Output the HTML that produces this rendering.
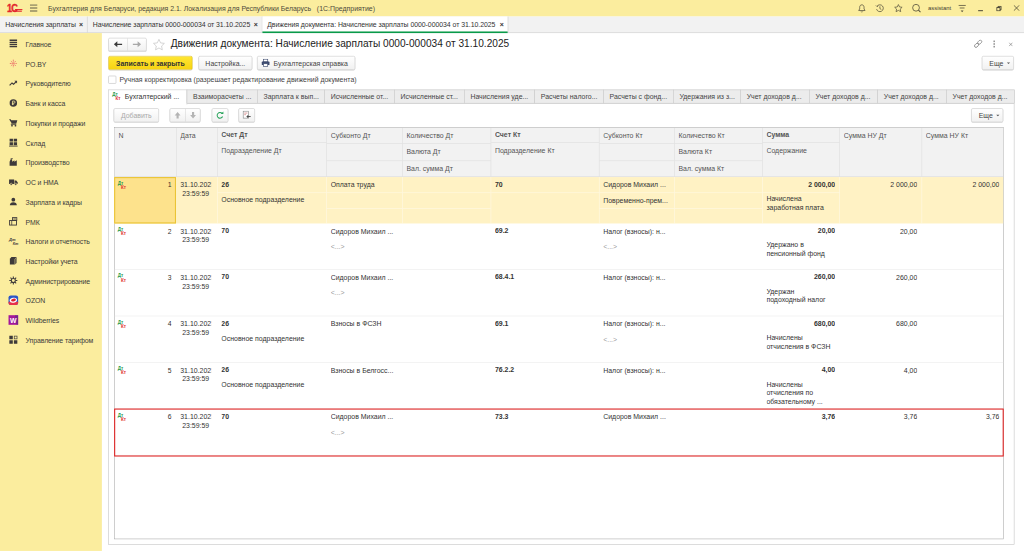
<!DOCTYPE html>
<html lang="ru">
<head>
<meta charset="utf-8">
<title>Движения документа: Начисление зарплаты 0000-000034 от 31.10.2025</title>
<style>
html,body{margin:0;padding:0;}
body{width:1024px;height:551px;overflow:hidden;background:#fff;font-family:"Liberation Sans",Arial,sans-serif;}
#app{position:absolute;left:0;top:0;width:1920px;height:1033px;transform:scale(0.533333);transform-origin:0 0;font-size:13px;color:#333;overflow:hidden;background:#fff;}
.abs{position:absolute;}
#topbar{position:absolute;left:0;top:0;width:1920px;height:31px;background:#fbed9e;}
#tabbar{position:absolute;left:0;top:31px;width:1920px;height:30px;background:#f2f2f2;border-bottom:1px solid #c9c9c9;}
#sidebar{position:absolute;left:0;top:62px;width:191px;height:971px;background:#fbed9e;}
.sitem{position:absolute;left:48px;height:20px;line-height:24px;letter-spacing:-0.2px;font-size:13px;color:#3c3c3c;white-space:nowrap;}
.sicon{position:absolute;left:16px;width:18px;height:18px;}
.wtab{position:absolute;top:0;height:30px;line-height:30px;font-size:13px;color:#333;white-space:nowrap;letter-spacing:-0.1px;}
.wsep{position:absolute;top:0;width:1px;height:30px;background:#c9c9c9;}
.wx{position:absolute;top:0;height:30px;line-height:30px;font-size:13px;font-weight:bold;color:#333;}
.btn{position:absolute;box-sizing:border-box;border:1px solid #c3c3c3;border-radius:3px;background:linear-gradient(#ffffff,#f1f1f1);box-shadow:0 1px 1px rgba(0,0,0,0.18);text-align:center;font-size:13px;color:#444;white-space:nowrap;}

.ybtn{font-weight:bold;background:linear-gradient(#ffe632,#f7d313);border-color:#d9b800;color:#333;}
.btn.dis{color:#a9a9a9;}
.car{position:absolute;right:6px;top:11px;width:0;height:0;border-left:3px solid transparent;border-right:3px solid transparent;border-top:3.500px solid #555;}
.tab{position:absolute;top:168px;height:26px;box-sizing:border-box;border:1px solid #c4c4c4;background:#ececec;line-height:24px;padding-left:11px;white-space:nowrap;overflow:hidden;color:#444;font-size:13px;}
.tab.act{background:#fff;border-bottom:none;height:28px;color:#333;}
.dk{width:20px;height:16px;font-weight:bold;font-size:8.5px;line-height:8px;}
.dk .dt{position:absolute;left:0;top:0;color:#1e9a4a;}
.dk .kt{position:absolute;left:6px;top:7.5px;color:#e03030;}
.vl{width:1px;background:#dcdcdc;}
.hl{height:1px;background:#dcdcdc;}
.ht{position:absolute;height:31px;line-height:31px;color:#555;white-space:nowrap;overflow:hidden;font-size:13px;}
.ct{position:absolute;height:16px;line-height:16px;color:#333;white-space:nowrap;overflow:hidden;font-size:13px;}
.ml{height:auto !important;}
.b{font-weight:bold;}
.r{text-align:right;}
.g{color:#9a9a9a;}
</style>
</head>
<body>
<div id="app">
<div id="topbar">
  <div class="abs" style="left:12px;top:3px;width:34px;height:24px;">
    <div class="abs" style="left:1px;top:0;font:bold 20px/24px 'Liberation Sans',sans-serif;color:#e3262e;-webkit-text-stroke:0.7px #e3262e;letter-spacing:-1.5px;transform:scaleX(0.86);transform-origin:0 0;">1С</div>
    <div class="abs" style="left:16px;top:13.500px;width:14px;height:2px;background:#e3262e;"></div>
    <div class="abs" style="left:13px;top:17.300px;width:16px;height:2.200px;background:#e3262e;"></div>
  </div>
  <svg class="abs" style="left:56px;top:8px" width="15" height="15" viewBox="0 0 15 15"><path d="M0 1.5h14M0 7h14M0 12.5h14" stroke="#5f5a46" stroke-width="2" fill="none"/></svg>
  <div class="abs" style="left:90px;top:0;height:31px;line-height:32px;font-size:13px;color:#4d4a3c;white-space:pre;">Бухгалтерия для Беларуси, редакция 2.1. Локализация для Республики Беларусь   (1С:Предприятие)</div>
  <!-- right icons -->
  <svg class="abs" style="left:1608px;top:6.500px" width="16" height="18" viewBox="0 0 18 20"><path d="M9 2.2c-3 0-4.6 2.3-4.6 5.2v3.4L2.3 14.2h13.4l-2.1-3.4V7.4c0-2.900-1.600-5.200-4.600-5.200z" fill="none" stroke="#55503c" stroke-width="1.6" stroke-linejoin="round"/><path d="M7.300 16.300a1.800 1.800 0 0 0 3.400 0" fill="none" stroke="#55503c" stroke-width="1.500"/></svg>
  <svg class="abs" style="left:1641px;top:6.800px" width="17.600" height="17.600" viewBox="0 0 20 20"><path d="M4.100 5.200A7.300 7.300 0 1 1 2.900 11.500" fill="none" stroke="#55503c" stroke-width="1.600"/><path d="M1.300 3.600l2.600 2.600 2.800-2.100" fill="none" stroke="#55503c" stroke-width="1.600"/><path d="M10 5.500v4.800l3 2" fill="none" stroke="#55503c" stroke-width="1.600"/></svg>
  <svg class="abs" style="left:1675.500px;top:7px" width="17" height="17" viewBox="0 0 20 20"><path d="M10 1.800l2.500 5.300 5.700.7-4.200 4 1.100 5.700-5.100-2.800-5.100 2.800 1.100-5.700-4.200-4 5.700-.7z" fill="none" stroke="#55503c" stroke-width="1.600" stroke-linejoin="round"/></svg>
  <svg class="abs" style="left:1708.500px;top:6px" width="19" height="19" viewBox="0 0 20 20"><circle cx="9" cy="9" r="6.700" fill="none" stroke="#55503c" stroke-width="1.600"/><path d="M13.800 13.800l4 4" stroke="#55503c" stroke-width="2" fill="none"/></svg>
  <div class="abs" style="left:1740px;top:0;height:31px;line-height:30px;font-size:11px;color:#3f3c30;">assistant</div>
  <svg class="abs" style="left:1797px;top:8px" width="14" height="16" viewBox="0 0 14 16"><path d="M0 2.200h14M2.500 7h9" stroke="#55503c" stroke-width="1.500" fill="none"/><path d="M4.300 11.500h5.400L7 14.800z" fill="#55503c"/></svg>
  <div class="abs" style="left:1833.500px;top:19px;width:9.500px;height:2px;background:#55503c;"></div>
  <svg class="abs" style="left:1867.500px;top:10.500px" width="10.500" height="10.500" viewBox="0 0 14 14"><rect x="1.200" y="4.300" width="8.300" height="8.300" fill="none" stroke="#3f3c30" stroke-width="2.400"/><path d="M4.500 4V1.300h8.200V9.500H9.800" fill="none" stroke="#3f3c30" stroke-width="2.200"/></svg>
  <svg class="abs" style="left:1900px;top:9px" width="12" height="12" viewBox="0 0 14 14"><path d="M1 1l12 12M13 1L1 13" stroke="#55503c" stroke-width="1.800" fill="none"/></svg>
</div>
<div id="tabbar">
  <div class="wtab" style="left:10px;">Начисления зарплаты</div><div class="wx" style="left:148px;">×</div>
  <div class="wsep" style="left:163px;"></div>
  <div class="wtab" style="left:174px;">Начисление зарплаты 0000-000034 от 31.10.2025</div><div class="wx" style="left:476px;">×</div>
  <div class="wsep" style="left:491px;"></div>
  <div class="abs" style="left:492px;top:0;width:460px;height:31px;background:#fff;"></div>
  <div class="abs" style="left:492px;top:28px;width:460px;height:3px;background:#0a9a4a;"></div>
  <div class="wtab" style="left:501px;">Движения документа: Начисление зарплаты 0000-000034 от 31.10.2025</div><div class="wx" style="left:937px;">×</div>
  <div class="wsep" style="left:952px;"></div>
</div>
<div id="sidebar">
  <svg class="abs" style="left:17px;top:12px;overflow:visible" width="16" height="16" viewBox="0 0 16 16"><path d="M1 1.500h14M1 5.500h14M1 9.500h14M1 13.500h14" stroke="#3e3a3a" stroke-width="2.600" fill="none"/></svg><div class="sitem" style="top:10px;">Главное</div>
  <svg class="abs" style="left:17px;top:49px;overflow:visible" width="16" height="16" viewBox="0 0 16 16"><g stroke="#e3304f" stroke-width="1.300" fill="none"><path d="M8 1v14M1.500 8h5M10 8h4.500M3.500 3.500l3 3M12.500 3.500l-3 3M3.500 12.500l3-3M12.500 12.500l-3-3" stroke-dasharray="2 1.200"/></g></svg><div class="sitem" style="top:47px;">PO.BY</div>
  <svg class="abs" style="left:17px;top:86px;overflow:visible" width="16" height="16" viewBox="0 0 16 16"><path d="M1 12l4.500-4.500 3 2.500 5-5" stroke="#3e3a3a" stroke-width="2.200" fill="none"/><path d="M10 3.500h5v5z" fill="#3e3a3a"/></svg><div class="sitem" style="top:84px;">Руководителю</div>
  <svg class="abs" style="left:17px;top:123px;overflow:visible" width="16" height="16" viewBox="0 0 16 16"><circle cx="8" cy="8" r="7" fill="#3e3a3a"/><path d="M6.500 12V4.500h2.700a2 2 0 0 1 0 4H5.300M5.300 10.300h4" stroke="#fbed9e" stroke-width="1.400" fill="none"/></svg><div class="sitem" style="top:121px;">Банк и касса</div>
  <svg class="abs" style="left:17px;top:160px;overflow:visible" width="16" height="16" viewBox="0 0 16 16"><path d="M0 1.500h3l1 2h11.500l-2 6.500H5.500z" fill="#3e3a3a"/><path d="M4.500 9.500l-.5 2h9.500" stroke="#3e3a3a" stroke-width="1.400" fill="none"/><circle cx="5.500" cy="13.700" r="1.600" fill="#3e3a3a"/><circle cx="12" cy="13.700" r="1.600" fill="#3e3a3a"/></svg><div class="sitem" style="top:158px;">Покупки и продажи</div>
  <svg class="abs" style="left:17px;top:197px;overflow:visible" width="16" height="16" viewBox="0 0 16 16"><path d="M1 1h6.300v5.500H1zM8.700 1H15v5.500H8.700zM1 7.900h6.300v5.500H1zM8.700 7.900H15v5.500H8.700z" fill="#3e3a3a"/><path d="M0 15h16" stroke="#3e3a3a" stroke-width="1.600"/></svg><div class="sitem" style="top:195px;">Склад</div>
  <svg class="abs" style="left:17px;top:234px;overflow:visible" width="16" height="16" viewBox="0 0 16 16"><path d="M1 15V7.500l2-5h2.500l.5 5 4-3v3l4.500-3V15z" fill="#3e3a3a"/><path d="M3 1.500h4" stroke="#3e3a3a" stroke-width="1.500"/></svg><div class="sitem" style="top:232px;">Производство</div>
  <svg class="abs" style="left:17px;top:271px;overflow:visible" width="16" height="16" viewBox="0 0 16 16"><path d="M0 3.500h9.500V12H0z" fill="#3e3a3a"/><path d="M10.300 5.500h3.200l2.500 3V12h-5.700z" fill="#3e3a3a"/><circle cx="4" cy="12.500" r="2" fill="#3e3a3a" stroke="#fbed9e" stroke-width="1"/><circle cx="12.500" cy="12.500" r="2" fill="#3e3a3a" stroke="#fbed9e" stroke-width="1"/></svg><div class="sitem" style="top:269px;">ОС и НМА</div>
  <svg class="abs" style="left:17px;top:308px;overflow:visible" width="16" height="16" viewBox="0 0 16 16"><circle cx="8" cy="4.500" r="3.500" fill="#3e3a3a"/><path d="M1.500 15c0-4 2.500-6 6.500-6s6.500 2 6.500 6z" fill="#3e3a3a"/></svg><div class="sitem" style="top:306px;">Зарплата и кадры</div>
  <svg class="abs" style="left:17px;top:345px;overflow:visible" width="16" height="16" viewBox="0 0 16 16"><rect x="1" y="6.500" width="13" height="8.500" fill="none" stroke="#3e3a3a" stroke-width="1.700"/><rect x="6.500" y="1" width="8" height="5" fill="none" stroke="#3e3a3a" stroke-width="1.600"/><path d="M5 7v8M8 3.500h5" stroke="#3e3a3a" stroke-width="1.400"/></svg><div class="sitem" style="top:343px;">РМК</div>
  <svg class="abs" style="left:17px;top:382px;overflow:visible" width="16" height="16" viewBox="0 0 16 16"><text x="0" y="7" font-family="Liberation Sans, sans-serif" font-size="7.500" font-weight="bold" font-style="italic" fill="#3e3a3a">Дт</text><text x="7" y="15" font-family="Liberation Sans, sans-serif" font-size="7" font-weight="bold" font-style="italic" fill="#3e3a3a">Кт</text></svg><div class="sitem" style="top:380px;">Налоги и отчетность</div>
  <svg class="abs" style="left:17px;top:419px;overflow:visible" width="16" height="16" viewBox="0 0 16 16"><path d="M1.500 4l3-3H14v11l-3 3H1.500z" fill="#3e3a3a"/><path d="M11 4.500V15M11 4.500l3-3" stroke="#fbed9e" stroke-width="1" fill="none"/></svg><div class="sitem" style="top:417px;">Настройки учета</div>
  <svg class="abs" style="left:17px;top:456px;overflow:visible" width="16" height="16" viewBox="0 0 16 16"><circle cx="8" cy="8" r="3.800" fill="none" stroke="#3e3a3a" stroke-width="2"/><path d="M8 0.500v3M8 12.500v3M0.500 8h3M12.500 8h3M2.700 2.700l2.100 2.100M11.200 11.200l2.100 2.100M2.700 13.300l2.100-2.100M11.200 4.800l2.100-2.100" stroke="#3e3a3a" stroke-width="2" fill="none"/></svg><div class="sitem" style="top:454px;">Администрирование</div>
  <svg class="abs" style="left:17px;top:493px;overflow:visible" width="16" height="16" viewBox="0 0 16 16"><rect x="-1" y="-1" width="18" height="18" rx="4" fill="#2b55c8"/><path d="M-1 11h18v2a4 4 0 0 1-4 4H3a4 4 0 0 1-4-4z" fill="#e8324a"/><ellipse cx="8" cy="8" rx="7" ry="4.600" fill="#fff" transform="rotate(-12 8 8)"/><ellipse cx="8.300" cy="7.700" rx="4.600" ry="2.600" fill="#e02030" transform="rotate(-12 8 8)"/></svg><div class="sitem" style="top:491px;">OZON</div>
  <svg class="abs" style="left:17px;top:530px;overflow:visible" width="16" height="16" viewBox="0 0 16 16"><rect x="-1" y="-1" width="18" height="18" fill="#a4179a"/><path d="M11 -1h6v18h-3z" fill="#5a2a86" opacity="0.600"/><text x="8" y="13" text-anchor="middle" font-family="Liberation Sans, sans-serif" font-size="13" font-weight="bold" fill="#fff">W</text></svg><div class="sitem" style="top:528px;">Wildberries</div>
  <svg class="abs" style="left:17px;top:567px;overflow:visible" width="16" height="16" viewBox="0 0 16 16"><path d="M0.500 0.500h6.500v6.500H0.500zM0.500 9h6.500v6.500H0.500zM9 9h6.500v6.500H9z" fill="#3e3a3a"/><rect x="9.700" y="1.200" width="5.200" height="5.200" fill="none" stroke="#3e3a3a" stroke-width="1.300"/></svg><div class="sitem" style="top:565px;">Управление тарифом</div>
</div>
<!--FORM_S-->
<div id="form">
<div class="btn" style="left:203px;top:71px;width:72px;height:25px;"></div>
<div class="abs" style="left:239px;top:72px;width:1px;height:23px;background:#d4d4d4;"></div>
<svg class="abs" style="left:212px;top:76px" width="18" height="14" viewBox="0 0 18 14"><path d="M17 7H4" stroke="#3a3a3a" stroke-width="2.400" fill="none"/><path d="M8 1.200L1.500 7 8 12.800z" fill="#3a3a3a"/></svg>
<svg class="abs" style="left:248px;top:76px" width="18" height="14" viewBox="0 0 18 14"><path d="M1 7h13" stroke="#a8a8a8" stroke-width="2.400" fill="none"/><path d="M10 1.200L16.500 7 10 12.800z" fill="#a8a8a8"/></svg>
<svg class="abs" style="left:286px;top:72px" width="24" height="24" viewBox="0 0 24 24"><path d="M12 1.800l3.100 6.600 7.100.9-5.200 5 1.300 7.100L12 18l-6.300 3.400L7 14.300l-5.200-5 7.100-.9z" fill="none" stroke="#c2c2c2" stroke-width="1.300" stroke-linejoin="round"/></svg>
<div class="abs" style="left:320px;top:68px;height:30px;line-height:30px;font-size:19px;color:#222;white-space:nowrap;">Движения документа: Начисление зарплаты 0000-000034 от 31.10.2025</div>
<svg class="abs" style="left:1826px;top:74px" width="17" height="17" viewBox="0 0 17 17"><g fill="none" stroke="#7a7a7a" stroke-width="1.400"><rect x="8.300" y="0.800" width="5.500" height="8.500" rx="2.750" transform="rotate(45 11 5)"/><rect x="2.300" y="6.800" width="5.500" height="8.500" rx="2.750" transform="rotate(45 5 11)"/></g></svg>
<div class="abs" style="left:1863px;top:76px;width:2px;height:3px;background:#666;"></div><div class="abs" style="left:1863px;top:81px;width:2px;height:3px;background:#666;"></div><div class="abs" style="left:1863px;top:86px;width:2px;height:3px;background:#666;"></div>
<svg class="abs" style="left:1890.500px;top:78.500px" width="8.500" height="8.500" viewBox="0 0 11 11"><path d="M1 1l9 9M10 1l-9 9" stroke="#7a7a7a" stroke-width="1.500" fill="none"/></svg>
<div class="btn ybtn" style="left:203px;top:105px;width:158px;height:26px;line-height:26px;">Записать и закрыть</div>
<div class="btn" style="left:372px;top:105px;width:101px;height:26px;line-height:26px;">Настройка...</div>
<div class="btn" style="left:482px;top:105px;width:184px;height:26px;line-height:26px;text-align:left;padding-left:30px;">Бухгалтерская справка</div>
<svg class="abs" style="left:490px;top:110px" width="16" height="16" viewBox="0 0 16 16"><rect x="4" y="1" width="8" height="5" fill="#fff" stroke="#3c4a6e" stroke-width="1.200"/><rect x="0.600" y="5.500" width="14.800" height="6.500" rx="1.200" fill="#3c4a6e"/><rect x="4" y="9.500" width="8" height="5.500" fill="#fff" stroke="#3c4a6e" stroke-width="1.200"/></svg>
<div class="btn" style="left:1841px;top:105px;width:60px;height:26px;line-height:26px;text-align:left;padding-left:13px;">Еще<span class="car"></span></div>
<div class="abs" style="left:203px;top:142px;width:15px;height:15px;box-sizing:border-box;border:1px solid #b9b9b9;border-radius:2px;background:#fff;"></div>
<div class="abs" style="left:224px;top:140px;height:20px;line-height:20px;color:#444;white-space:nowrap;">Ручная корректировка (разрешает редактирование движений документа)</div>
<div class="abs" style="left:203px;top:193px;width:1699px;height:828px;box-sizing:border-box;border:1px solid #bdbdbd;background:#fff;"></div>
<div class="tab act" style="left:203px;width:148px;padding-left:30px;">Бухгалтерский ...</div>
<div class="abs dk" style="left:210.5px;top:172.5px;"><span class="dt">Дт</span><span class="kt">Кт</span></div>
<div class="tab" style="left:350px;width:133px;">Взаиморасчеты ...</div>
<div class="tab" style="left:482px;width:127px;">Зарплата к вып...</div>
<div class="tab" style="left:608px;width:132px;">Исчисленные от...</div>
<div class="tab" style="left:739px;width:132px;">Исчисленные ст...</div>
<div class="tab" style="left:870px;width:133px;">Начисления уде...</div>
<div class="tab" style="left:1002px;width:130px;">Расчеты налого...</div>
<div class="tab" style="left:1131px;width:132px;">Расчеты с фонд...</div>
<div class="tab" style="left:1262px;width:127px;">Удержания из з...</div>
<div class="tab" style="left:1388px;width:130px;">Учет доходов д...</div>
<div class="tab" style="left:1517px;width:129px;">Учет доходов д...</div>
<div class="tab" style="left:1645px;width:130px;">Учет доходов д...</div>
<div class="tab" style="left:1774px;width:129px;">Учет доходов д...</div>
<div class="btn dis" style="left:213px;top:203px;width:85px;height:26px;line-height:26px;">Добавить</div>
<div class="btn" style="left:318px;top:203px;width:58px;height:26px;"></div>
<div class="abs" style="left:347px;top:204px;width:1px;height:24px;background:#d4d4d4;"></div>
<svg class="abs" style="left:326px;top:209px" width="14" height="14" viewBox="0 0 14 14"><path d="M7 1L1.500 7.500H5V13h4V7.500h3.500z" fill="#b4b4b4"/></svg>
<svg class="abs" style="left:355px;top:209px" width="14" height="14" viewBox="0 0 14 14"><path d="M7 13L1.500 6.500H5V1h4v5.500h3.500z" fill="#b4b4b4"/></svg>
<div class="btn" style="left:397px;top:203px;width:31px;height:26px;"></div>
<svg class="abs" style="left:404px;top:208px" width="17" height="17" viewBox="0 0 17 17"><path d="M13.300 10.500A5.300 5.300 0 1 1 12.600 5" fill="none" stroke="#27a35a" stroke-width="1.900"/><path d="M9.800 5.800h5V0.900z" fill="#27a35a"/></svg>
<div class="btn" style="left:447px;top:203px;width:31px;height:26px;"></div>
<svg class="abs" style="left:454px;top:207px" width="18" height="18" viewBox="0 0 18 18"><rect x="2" y="1.500" width="10" height="13" fill="#fff" stroke="#8a8a8a" stroke-width="1.200"/><path d="M4 5h6M4 8h3" stroke="#c66" stroke-width="1.200"/><path d="M16 11.500H9" stroke="#4a4a4a" stroke-width="1.800"/><path d="M11.500 8L8 11.500l3.500 3.500z" fill="#4a4a4a"/></svg>
<div class="btn" style="left:1821px;top:203px;width:60px;height:26px;line-height:26px;text-align:left;padding-left:13px;">Еще<span class="car"></span></div>
<div class="abs" style="left:214px;top:238.5px;width:1668px;height:772.5px;box-sizing:border-box;border:1px solid #a4a4a4;background:#fff;"></div>
<div class="abs" style="left:215px;top:239.5px;width:1666px;height:92.5px;background:#f2f2f2;border-bottom:1px solid #d6d6d6;box-sizing:border-box;"></div>
<div class="abs vl" style="left:330px;top:239.5px;height:91.5px;"></div>
<div class="abs vl" style="left:407px;top:239.5px;height:91.5px;"></div>
<div class="abs vl" style="left:612px;top:239.5px;height:91.5px;"></div>
<div class="abs vl" style="left:754px;top:239.5px;height:91.5px;"></div>
<div class="abs vl" style="left:920px;top:239.5px;height:91.5px;"></div>
<div class="abs vl" style="left:1123px;top:239.5px;height:91.5px;"></div>
<div class="abs vl" style="left:1264px;top:239.5px;height:91.5px;"></div>
<div class="abs vl" style="left:1429px;top:239.5px;height:91.5px;"></div>
<div class="abs vl" style="left:1574px;top:239.5px;height:91.5px;"></div>
<div class="abs vl" style="left:1728px;top:239.5px;height:91.5px;"></div>
<div class="abs hl" style="left:408px;top:266.5px;width:204px;"></div>
<div class="abs hl" style="left:921px;top:266.5px;width:202px;"></div>
<div class="abs hl" style="left:1430px;top:266.5px;width:144px;"></div>
<div class="abs hl" style="left:613px;top:268.5px;width:141px;"></div>
<div class="abs hl" style="left:613px;top:300.5px;width:141px;"></div>
<div class="abs hl" style="left:755px;top:268.5px;width:165px;"></div>
<div class="abs hl" style="left:755px;top:300.5px;width:165px;"></div>
<div class="abs hl" style="left:1124px;top:268.5px;width:140px;"></div>
<div class="abs hl" style="left:1124px;top:300.5px;width:140px;"></div>
<div class="abs hl" style="left:1265px;top:268.5px;width:164px;"></div>
<div class="abs hl" style="left:1265px;top:300.5px;width:164px;"></div>
<div class="ht" style="left:222px;top:237.5px;width:104px;">N</div>
<div class="ht" style="left:338px;top:237.5px;width:65px;">Дата</div>
<div class="ht b" style="left:415px;top:236.5px;width:193px;">Счет Дт</div>
<div class="ht" style="left:415px;top:266.5px;width:193px;">Подразделение Дт</div>
<div class="ht" style="left:620px;top:237.5px;width:130px;">Субконто Дт</div>
<div class="ht" style="left:762px;top:237.5px;width:154px;">Количество Дт</div>
<div class="ht" style="left:762px;top:268.5px;width:154px;">Валюта Дт</div>
<div class="ht" style="left:762px;top:299.5px;width:154px;">Вал. сумма Дт</div>
<div class="ht b" style="left:928px;top:236.5px;width:191px;">Счет Кт</div>
<div class="ht" style="left:928px;top:266.5px;width:191px;">Подразделение Кт</div>
<div class="ht" style="left:1131px;top:237.5px;width:129px;">Субконто Кт</div>
<div class="ht" style="left:1272px;top:237.5px;width:153px;">Количество Кт</div>
<div class="ht" style="left:1272px;top:268.5px;width:153px;">Валюта Кт</div>
<div class="ht" style="left:1272px;top:299.5px;width:153px;">Вал. сумма Кт</div>
<div class="ht b" style="left:1437px;top:236.5px;width:133px;">Сумма</div>
<div class="ht" style="left:1437px;top:266.5px;width:133px;">Содержание</div>
<div class="ht" style="left:1582px;top:237.5px;width:142px;">Сумма НУ Дт</div>
<div class="ht" style="left:1736px;top:237.5px;width:142px;">Сумма НУ Кт</div>
<div class="abs" style="left:215px;top:332px;width:1666px;height:87px;background:#fff2c4;"></div>
<div class="abs" style="left:214px;top:332px;width:116px;height:87px;box-sizing:border-box;background:#fde28c;border:2px solid #eac435;"></div>
<div class="abs" style="left:407px;top:332px;width:1px;height:87px;background:#fffaea;"></div>
<div class="abs" style="left:612px;top:332px;width:1px;height:87px;background:#fffaea;"></div>
<div class="abs" style="left:754px;top:332px;width:1px;height:87px;background:#fffaea;"></div>
<div class="abs" style="left:920px;top:332px;width:1px;height:87px;background:#fffaea;"></div>
<div class="abs" style="left:1123px;top:332px;width:1px;height:87px;background:#fffaea;"></div>
<div class="abs" style="left:1264px;top:332px;width:1px;height:87px;background:#fffaea;"></div>
<div class="abs" style="left:1429px;top:332px;width:1px;height:87px;background:#fffaea;"></div>
<div class="abs" style="left:1574px;top:332px;width:1px;height:87px;background:#fffaea;"></div>
<div class="abs" style="left:1728px;top:332px;width:1px;height:87px;background:#fffaea;"></div>
<div class="abs" style="left:408px;top:361px;width:204px;height:1px;background:#fffaea;"></div>
<div class="abs" style="left:921px;top:361px;width:202px;height:1px;background:#fffaea;"></div>
<div class="abs" style="left:1430px;top:361px;width:144px;height:1px;background:#fffaea;"></div>
<div class="abs" style="left:613px;top:361px;width:141px;height:1px;background:#fffaea;"></div>
<div class="abs" style="left:613px;top:390px;width:141px;height:1px;background:#fffaea;"></div>
<div class="abs" style="left:755px;top:361px;width:165px;height:1px;background:#fffaea;"></div>
<div class="abs" style="left:755px;top:390px;width:165px;height:1px;background:#fffaea;"></div>
<div class="abs" style="left:1124px;top:361px;width:140px;height:1px;background:#fffaea;"></div>
<div class="abs" style="left:1124px;top:390px;width:140px;height:1px;background:#fffaea;"></div>
<div class="abs" style="left:1265px;top:361px;width:164px;height:1px;background:#fffaea;"></div>
<div class="abs" style="left:1265px;top:390px;width:164px;height:1px;background:#fffaea;"></div>
<div class="abs dk" style="left:221px;top:339px;"><span class="dt">Дт</span><span class="kt">Кт</span></div>
<div class="ct r" style="left:222px;top:339px;width:100px;">1</div>
<div class="ct" style="left:338px;top:339px;width:58px;text-align:center;white-space:normal;height:32px;"><span style="display:block;text-align:left;white-space:nowrap;">31.10.2025</span>23:59:59</div>
<div class="ct b" style="left:415px;top:337.5px;width:189px;">26</div>
<div class="ct " style="left:415px;top:365.5px;width:189px;">Основное подразделение</div>
<div class="ct " style="left:620px;top:339px;width:126px;">Оплата труда</div>
<div class="ct b" style="left:928px;top:337.5px;width:187px;">70</div>
<div class="ct " style="left:1131px;top:339px;width:125px;">Сидоров Михаил ...</div>
<div class="ct " style="left:1131px;top:368px;width:125px;">Повременно-прем...</div>
<div class="ct b r" style="left:1437px;top:338px;width:129px;">2 000,00</div>
<div class="ct ml" style="left:1437px;top:365px;width:135px;white-space:nowrap;">Начислена<br>заработная плата</div>
<div class="ct r" style="left:1582px;top:339px;width:138px;">2 000,00</div>
<div class="ct r" style="left:1736px;top:339px;width:138px;">2 000,00</div>
<div class="abs" style="left:215px;top:505px;width:1666px;height:1px;background:#e9e9e9;"></div>
<div class="abs dk" style="left:221px;top:426px;"><span class="dt">Дт</span><span class="kt">Кт</span></div>
<div class="ct r" style="left:222px;top:426px;width:100px;">2</div>
<div class="ct" style="left:338px;top:426px;width:58px;text-align:center;white-space:normal;height:32px;"><span style="display:block;text-align:left;white-space:nowrap;">31.10.2025</span>23:59:59</div>
<div class="ct b" style="left:415px;top:424.5px;width:189px;">70</div>
<div class="ct " style="left:620px;top:426px;width:126px;">Сидоров Михаил ...</div>
<div class="ct g" style="left:620px;top:455px;width:126px;">&lt;...&gt;</div>
<div class="ct b" style="left:928px;top:424.5px;width:187px;">69.2</div>
<div class="ct " style="left:1131px;top:426px;width:125px;">Налог (взносы): н...</div>
<div class="ct g" style="left:1131px;top:455px;width:125px;">&lt;...&gt;</div>
<div class="ct b r" style="left:1437px;top:425px;width:129px;">20,00</div>
<div class="ct ml" style="left:1437px;top:452px;width:135px;white-space:nowrap;">Удержано в<br>пенсионный фонд</div>
<div class="ct r" style="left:1582px;top:426px;width:138px;">20,00</div>
<div class="abs" style="left:215px;top:592px;width:1666px;height:1px;background:#e9e9e9;"></div>
<div class="abs dk" style="left:221px;top:513px;"><span class="dt">Дт</span><span class="kt">Кт</span></div>
<div class="ct r" style="left:222px;top:513px;width:100px;">3</div>
<div class="ct" style="left:338px;top:513px;width:58px;text-align:center;white-space:normal;height:32px;"><span style="display:block;text-align:left;white-space:nowrap;">31.10.2025</span>23:59:59</div>
<div class="ct b" style="left:415px;top:511.5px;width:189px;">70</div>
<div class="ct " style="left:620px;top:513px;width:126px;">Сидоров Михаил ...</div>
<div class="ct g" style="left:620px;top:542px;width:126px;">&lt;...&gt;</div>
<div class="ct b" style="left:928px;top:511.5px;width:187px;">68.4.1</div>
<div class="ct " style="left:1131px;top:513px;width:125px;">Налог (взносы): н...</div>
<div class="ct b r" style="left:1437px;top:512px;width:129px;">260,00</div>
<div class="ct ml" style="left:1437px;top:539px;width:135px;white-space:nowrap;">Удержан<br>подоходный налог</div>
<div class="ct r" style="left:1582px;top:513px;width:138px;">260,00</div>
<div class="abs" style="left:215px;top:679px;width:1666px;height:1px;background:#e9e9e9;"></div>
<div class="abs dk" style="left:221px;top:600px;"><span class="dt">Дт</span><span class="kt">Кт</span></div>
<div class="ct r" style="left:222px;top:600px;width:100px;">4</div>
<div class="ct" style="left:338px;top:600px;width:58px;text-align:center;white-space:normal;height:32px;"><span style="display:block;text-align:left;white-space:nowrap;">31.10.2025</span>23:59:59</div>
<div class="ct b" style="left:415px;top:598.5px;width:189px;">26</div>
<div class="ct " style="left:415px;top:626.5px;width:189px;">Основное подразделение</div>
<div class="ct " style="left:620px;top:600px;width:126px;">Взносы в ФСЗН</div>
<div class="ct b" style="left:928px;top:598.5px;width:187px;">69.1</div>
<div class="ct " style="left:1131px;top:600px;width:125px;">Налог (взносы): н...</div>
<div class="ct g" style="left:1131px;top:629px;width:125px;">&lt;...&gt;</div>
<div class="ct b r" style="left:1437px;top:599px;width:129px;">680,00</div>
<div class="ct ml" style="left:1437px;top:626px;width:135px;white-space:nowrap;">Начислены<br>отчисления в ФСЗН</div>
<div class="ct r" style="left:1582px;top:600px;width:138px;">680,00</div>
<div class="abs" style="left:215px;top:766px;width:1666px;height:1px;background:#e9e9e9;"></div>
<div class="abs dk" style="left:221px;top:687px;"><span class="dt">Дт</span><span class="kt">Кт</span></div>
<div class="ct r" style="left:222px;top:687px;width:100px;">5</div>
<div class="ct" style="left:338px;top:687px;width:58px;text-align:center;white-space:normal;height:32px;"><span style="display:block;text-align:left;white-space:nowrap;">31.10.2025</span>23:59:59</div>
<div class="ct b" style="left:415px;top:685.5px;width:189px;">26</div>
<div class="ct " style="left:415px;top:713.5px;width:189px;">Основное подразделение</div>
<div class="ct " style="left:620px;top:687px;width:126px;">Взносы в Белгосс...</div>
<div class="ct b" style="left:928px;top:685.5px;width:187px;">76.2.2</div>
<div class="ct " style="left:1131px;top:687px;width:125px;">Налог (взносы): н...</div>
<div class="ct b r" style="left:1437px;top:686px;width:129px;">4,00</div>
<div class="ct ml" style="left:1437px;top:713px;width:135px;white-space:nowrap;">Начислены<br>отчисления по<br>обязательному ...</div>
<div class="ct r" style="left:1582px;top:687px;width:138px;">4,00</div>
<div class="abs" style="left:215px;top:853px;width:1666px;height:1px;background:#e9e9e9;"></div>
<div class="abs dk" style="left:221px;top:774px;"><span class="dt">Дт</span><span class="kt">Кт</span></div>
<div class="ct r" style="left:222px;top:774px;width:100px;">6</div>
<div class="ct" style="left:338px;top:774px;width:58px;text-align:center;white-space:normal;height:32px;"><span style="display:block;text-align:left;white-space:nowrap;">31.10.2025</span>23:59:59</div>
<div class="ct b" style="left:415px;top:772.5px;width:189px;">70</div>
<div class="ct " style="left:620px;top:774px;width:126px;">Сидоров Михаил ...</div>
<div class="ct g" style="left:620px;top:803px;width:126px;">&lt;...&gt;</div>
<div class="ct b" style="left:928px;top:772.5px;width:187px;">73.3</div>
<div class="ct " style="left:1131px;top:774px;width:125px;">Сидоров Михаил ...</div>
<div class="ct b r" style="left:1437px;top:773px;width:129px;">3,76</div>
<div class="ct r" style="left:1582px;top:774px;width:138px;">3,76</div>
<div class="ct r" style="left:1736px;top:774px;width:138px;">3,76</div>
<div class="abs" style="left:214px;top:766px;width:1668px;height:90px;box-sizing:border-box;border:2px solid #e02020;"></div>
</div>
<!--FORM_E-->
</div>
</body>
</html>
